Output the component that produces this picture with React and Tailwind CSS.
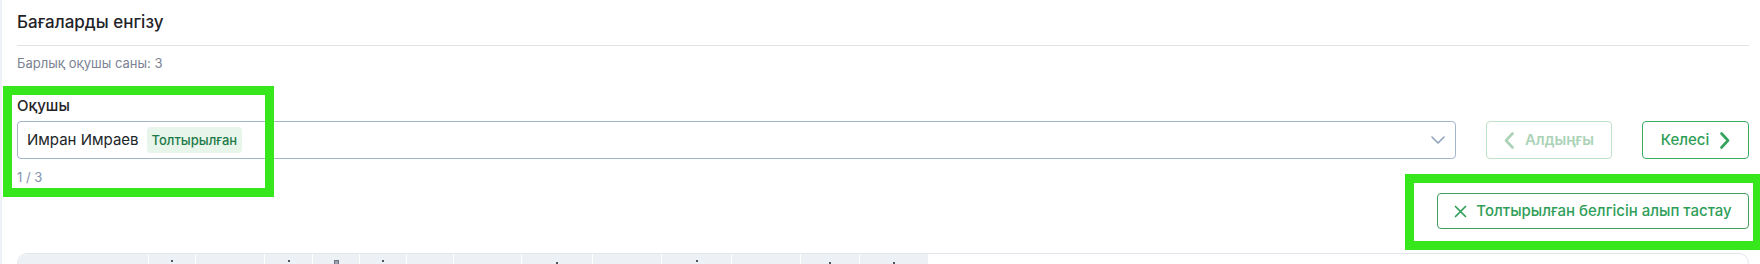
import React from "react";

const cols = [131, 47, 69, 48, 47, 47, 47, 68, 71, 69, 70, 69, 59, 69];
const marks = { 1: "dots", 3: "dots", 4: "icon", 5: "dots", 8: "bar", 10: "dots", 12: "bar", 13: "bar" };

function ChevronDown() {
  return (
    <svg width="14" height="8" viewBox="0 0 14 8" fill="none">
      <path d="M1 1l6 6 6-6" stroke="#8fa3bb" strokeWidth="1.6" strokeLinecap="round" strokeLinejoin="round" />
    </svg>
  );
}

function ChevronLeft({ color }) {
  return (
    <svg width="10" height="17" viewBox="0 0 10 17" fill="none">
      <path d="M8.5 1.5L2 8.5l6.5 7" stroke={color} strokeWidth="2.6" strokeLinecap="round" strokeLinejoin="round" />
    </svg>
  );
}

function ChevronRight({ color }) {
  return (
    <svg width="10" height="17" viewBox="0 0 10 17" fill="none">
      <path d="M1.5 1.5L8 8.5l-6.5 7" stroke={color} strokeWidth="2.6" strokeLinecap="round" strokeLinejoin="round" />
    </svg>
  );
}

function XIcon() {
  return (
    <svg width="13" height="13" viewBox="0 0 13 13" fill="none">
      <path d="M1.5 1.5l10 10M11.5 1.5l-10 10" stroke="#2f9e58" strokeWidth="1.7" strokeLinecap="round" />
    </svg>
  );
}

function Mark({ type }) {
  if (type === "dots")
    return (
      <div className="flex flex-col items-center gap-[2px] pt-[6px]">
        <span className="block w-[2px] h-[2px] bg-[#4b5563]" />
        <span className="block w-[2px] h-[2px] bg-[#4b5563]" />
      </div>
    );
  if (type === "icon")
    return (
      <div className="pt-[6px]">
        <span className="block w-[5px] h-[5px] border border-[#6b7280] bg-[#9ca3af]" />
      </div>
    );
  return (
    <div className="pt-[8px]">
      <span className="block w-[2px] h-[6px] bg-[#4b5563]" />
    </div>
  );
}

export default function App() {
  return (
    <div className="relative w-[1760px] h-[264px] overflow-hidden bg-white border-l-2 border-[#eef1f5] [font-family:Inter,sans-serif]">
      <div className="pl-[15px] pr-[11px]">
        <div className="pt-[10px] pb-[11px] border-b border-[#e3e3e3]">
          <h2 className="text-[17px] leading-[24px] font-medium text-[#1f2328]">Бағаларды енгізу</h2>
        </div>
        <p className="mt-[7px] text-[13px] leading-[20px] text-[#7b8294]">Барлық оқушы саны: 3</p>

        <div className="mt-[23px] text-[15px] leading-[20px] font-medium text-[#1f2328]">Оқушы</div>
        <div className="mt-[5px] flex items-center gap-[30px]">
          <div className="flex-1 h-[38px] rounded-[4px] border border-[#a4b6ca] flex items-center pl-[9px] pr-[10px]">
            <span className="text-[15px] leading-[22px] text-[#212529]">Имран Имраев</span>
            <span className="ml-[8px] h-[26px] px-[5px] rounded-[4px] bg-[#e7f5eb] text-[13px] leading-[26px] font-medium text-[#1d7a47]">
              Толтырылған
            </span>
            <span className="ml-auto flex items-center">
              <ChevronDown />
            </span>
          </div>
          <button className="w-[126px] h-[38px] rounded-[4px] border border-[#bfe2ca] flex items-center justify-center gap-[11px] text-[15px] font-semibold text-[#acd3b8]">
            <ChevronLeft color="#acd3b8" />
            Алдыңғы
          </button>
          <button className="w-[107px] h-[38px] rounded-[4px] border border-[#3dab61] flex items-center justify-center gap-[11px] text-[15px] font-medium text-[#2f9e58]">
            Келесі
            <ChevronRight color="#33a35c" />
          </button>
        </div>
        <div className="mt-[8px] text-[13px] leading-[20px] text-[#8292aa]">1 / 3</div>

        <div className="mt-[6px] flex justify-end">
          <button className="w-[312px] h-[36px] rounded-[4px] border border-[#3f9f5f] flex items-center justify-center gap-[9px] text-[15px] font-medium text-[#2f9e58]">
            <XIcon />
            Толтырылған белгісін алып тастау
          </button>
        </div>

        <div className="mt-[24px] h-[40px] rounded-t-[10px] border border-[#e2e6ec] overflow-hidden">
          <div className="flex h-full">
            {cols.map((w, i) => (
              <div
                key={i}
                style={{ width: w }}
                className="h-full bg-[#edf0f5] border-r border-white flex justify-center"
              >
                {marks[i] ? <Mark type={marks[i]} /> : null}
              </div>
            ))}
          </div>
        </div>
      </div>

      <div className="absolute left-[1px] top-[86px] w-[271px] h-[111px] border-[9px] border-[#36e71b]" />
      <div className="absolute left-[1403px] top-[174px] w-[357px] h-[76px] border-[9px] border-[#36e71b]" />
    </div>
  );
}
